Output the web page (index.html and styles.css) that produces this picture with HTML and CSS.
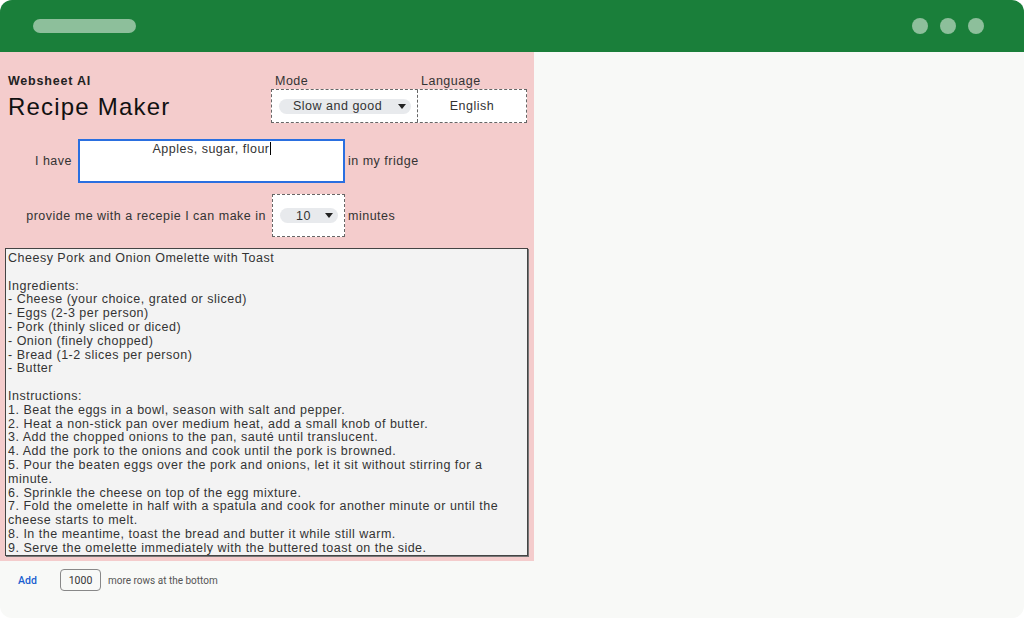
FILE: index.html
```html
<!DOCTYPE html>
<html>
<head>
<meta charset="utf-8">
<link rel="stylesheet" href="styles.css">
</head>
<body>
<div class="window">
  <div class="titlebar">
    <div class="pill"></div>
    <div class="dots"><span></span><span></span><span></span></div>
  </div>
  <div class="content">
    <div class="sheet">
      <div class="row row-head">
        <div class="brand">
          <div class="brand-small">Websheet AI</div>
          <div class="brand-title">Recipe Maker</div>
        </div>
        <div class="settings">
          <div class="labels"><span class="lab-mode">Mode</span><span class="lab-lang">Language</span></div>
          <div class="setbox">
            <div class="mode-cell"><div class="chip chip-wide"><span>Slow and good</span><i class="tri"></i></div></div>
            <div class="lang-cell">English</div>
          </div>
        </div>
      </div>
      <div class="row row-fridge">
        <div class="lbl-have">I have</div>
        <div class="input-box">Apples, sugar, flour<span class="caret"></span></div>
        <div class="after">in my fridge</div>
      </div>
      <div class="row row-min">
        <div class="lbl-prov">provide me with a recepie I can make in</div>
        <div class="min-box"><div class="chip chip-small"><span>10</span><i class="tri"></i></div></div>
        <div class="after">minutes</div>
      </div>
      <div class="output">Cheesy Pork and Onion Omelette with Toast

Ingredients:
- Cheese (your choice, grated or sliced)
- Eggs (2-3 per person)
- Pork (thinly sliced or diced)
- Onion (finely chopped)
- Bread (1-2 slices per person)
- Butter

Instructions:
1. Beat the eggs in a bowl, season with salt and pepper.
2. Heat a non-stick pan over medium heat, add a small knob of butter.
3. Add the chopped onions to the pan, sauté until translucent.
4. Add the pork to the onions and cook until the pork is browned.
5. Pour the beaten eggs over the pork and onions, let it sit without stirring for a
minute.
6. Sprinkle the cheese on top of the egg mixture.
7. Fold the omelette in half with a spatula and cook for another minute or until the
cheese starts to melt.
8. In the meantime, toast the bread and butter it while still warm.
9. Serve the omelette immediately with the buttered toast on the side.</div>
    </div>
    <div class="footer">
      <span class="add">Add</span>
      <span class="rows-input">1000</span>
      <span class="more">more rows at the bottom</span>
    </div>
  </div>
</div>
</body>
</html>
```

FILE: styles.css
```css
html, body {
  margin: 0;
  padding: 0;
  background: #ffffff;
}
body {
  width: 1024px;
  height: 618px;
  overflow: hidden;
  font-family: "Liberation Sans", Arial, sans-serif;
}
.window {
  width: 1024px;
  height: 618px;
  border-radius: 12px;
  overflow: hidden;
  background: #f8f9f7;
  display: flex;
  flex-direction: column;
}
.titlebar {
  height: 52px;
  flex: none;
  background: #1a7f3a;
  display: flex;
  align-items: center;
  justify-content: space-between;
  padding: 0 40px 0 33px;
}
.pill {
  width: 103px;
  height: 14px;
  border-radius: 7px;
  background: #8dbf9b;
}
.dots {
  display: flex;
  gap: 12px;
}
.dots span {
  width: 16px;
  height: 16px;
  border-radius: 50%;
  background: #8dbf9b;
}
.content {
  flex: 1;
}
.sheet {
  width: 534px;
  height: 509px;
  background: #f4cccc;
  box-sizing: border-box;
  padding-top: 20px;
  color: #333;
  font-size: 12.5px;
  letter-spacing: 0.5px;
}
.row {
  display: flex;
}
.row-head {
  height: 53px;
}
.brand {
  width: 263px;
  padding-left: 8px;
}
.brand-small {
  font-size: 12.5px;
  font-weight: bold;
  color: #222;
  margin-top: 2px;
  letter-spacing: 0.8px;
}
.brand-title {
  font-size: 24px;
  color: #111;
  margin-top: 5px;
  letter-spacing: 1.2px;
}
.settings {
  width: 256px;
}
.labels {
  display: flex;
  height: 17px;
  padding-top: 2px;
  box-sizing: border-box;
}
.lab-mode {
  width: 146px;
  padding-left: 4px;
}
.setbox {
  display: flex;
  height: 34px;
  border: 1px dashed #666;
  background: #fff;
  box-sizing: border-box;
}
.mode-cell {
  width: 146px;
  border-right: 1px dashed #666;
  display: flex;
  align-items: center;
  padding-left: 7px;
  box-sizing: border-box;
}
.lang-cell {
  flex: 1;
  display: flex;
  align-items: center;
  justify-content: center;
}
.chip {
  height: 15px;
  border-radius: 8px;
  background: #e8eaed;
  display: flex;
  align-items: center;
  justify-content: space-between;
  box-sizing: border-box;
  color: #333;
}
.chip-wide {
  width: 132px;
  padding: 0 5px 0 14px;
}
.chip-small {
  width: 58px;
  padding: 0 5px 0 16px;
}
.tri {
  width: 0;
  height: 0;
  border-left: 4px solid transparent;
  border-right: 4px solid transparent;
  border-top: 5px solid #222;
}
.row-fridge {
  margin-top: 14px;
  height: 44px;
  align-items: center;
}
.lbl-have {
  width: 72px;
  text-align: right;
  padding-right: 6px;
  box-sizing: content-box;
}
.input-box {
  width: 267px;
  height: 44px;
  box-sizing: border-box;
  border: 2px solid #2a6fe0;
  background: #fff;
  text-align: center;
  padding-top: 1px;
  color: #333;
}
.caret {
  display: inline-block;
  width: 1px;
  height: 13px;
  background: #000;
  vertical-align: -2px;
}
.after {
  padding-left: 3px;
}
.row-min {
  margin-top: 11px;
  height: 43px;
  align-items: center;
}
.lbl-prov {
  width: 266px;
  text-align: right;
  padding-right: 6px;
}
.min-box {
  width: 73px;
  height: 43px;
  box-sizing: border-box;
  border: 1px dashed #666;
  background: #fff;
  display: flex;
  align-items: center;
  padding-left: 7px;
}
.output {
  margin: 11px 0 0 5px;
  width: 523px;
  height: 308px;
  box-sizing: border-box;
  background: #f3f3f3;
  border: 1px solid #444;
  box-shadow: 1px 1px 0 #777;
  white-space: pre;
  padding: 3px 2px 0;
  line-height: 13.8px;
  color: #333;
  overflow: hidden;
}
.footer {
  display: flex;
  align-items: center;
  height: 22px;
  margin-top: 8px;
  font-family: Roboto, "Liberation Sans", sans-serif;
  font-size: 10px;
  color: #555;
}
.add {
  color: #1a5fd0;
  font-weight: 500;
  padding-left: 18px;
  width: 42px;
  font-size: 10.5px;
}
.rows-input {
  width: 41px;
  height: 22px;
  box-sizing: border-box;
  border: 1px solid #888;
  border-radius: 4px;
  display: flex;
  align-items: center;
  justify-content: center;
  color: #333;
  font-size: 10.5px;
}
.more {
  padding-left: 7px;
}
```
